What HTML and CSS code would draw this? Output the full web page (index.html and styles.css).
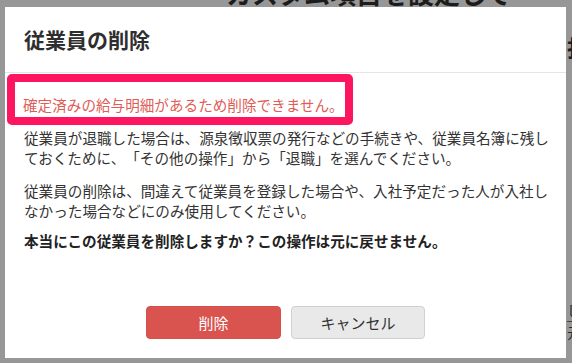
FILE: index.html
```html
<!DOCTYPE html>
<html lang="ja">
<head>
<meta charset="utf-8">
<title>従業員の削除</title>
<link rel="stylesheet" href="styles.css">
</head>
<body>
<div class="page">
  <div class="page-main">
    <h1 class="page-heading">カスタム項目を設定して</h1>
  </div>
  <div class="page-side">
    <div class="side-big">払</div>
    <div class="side-small side-small-1">し</div>
    <div class="side-rule"></div>
    <div class="side-small side-small-2">元</div>
  </div>
</div>

<div class="modal">
  <div class="modal-header">
    <h2 class="modal-title">従業員の削除</h2>
  </div>
  <div class="modal-body">
    <div class="alert-mark">
      <p class="alert-text">確定済みの給与明細があるため削除できません。</p>
    </div>
    <p class="para para-first">従業員が退職した場合は、源泉徴収票の発行などの手続きや、従業員名簿に残しておくために、「その他の操作」から「退職」を選んでください。</p>
    <p class="para para-second">従業員の削除は、間違えて従業員を登録した場合や、入社予定だった人が入社しなかった場合などにのみ使用してください。</p>
    <p class="para para-strong">本当にこの従業員を削除しますか？この操作は元に戻せません。</p>
  </div>
  <div class="modal-footer">
    <button class="btn btn-danger" type="button">削除</button>
    <button class="btn btn-default" type="button">キャンセル</button>
  </div>
</div>
</body>
</html>
```

FILE: styles.css
```css
html, body {
  margin: 0;
  padding: 0;
}

body {
  width: 572px;
  height: 363px;
  overflow: hidden;
  background: #979797;
  font-family: "Noto Sans CJK JP", "Noto Sans", "Liberation Sans", sans-serif;
  color: #333;
  position: relative;
  text-spacing-trim: space-all;
}

.page {
  display: grid;
  grid-template-columns: 567px 1fr;
  height: 363px;
  overflow: hidden;
  color: #1c1c1c;
}

.page-heading {
  margin: -24px 0 0 226px;
  font-size: 26px;
  font-weight: 700;
  line-height: 34px;
  white-space: nowrap;
}

.page-side {
  display: flex;
  flex-direction: column;
  overflow: hidden;
}

.side-big {
  margin-top: 33px;
  font-size: 22px;
  font-weight: 700;
  line-height: 26px;
  white-space: nowrap;
}

.side-small {
  font-size: 14px;
  line-height: 16px;
  color: #2a2a2a;
}

.side-small-1 {
  margin-top: 243px;
}

.side-rule {
  margin-top: 3px;
  height: 1px;
  background: #444;
}

.side-small-2 {
  margin-top: 2px;
}

.modal {
  position: absolute;
  left: 5px;
  top: 7px;
  width: 561px;
  height: 351px;
  background: #fff;
  display: flex;
  flex-direction: column;
}

.modal-header {
  height: 65px;
  border-bottom: 1px solid #e5e5e5;
  display: flex;
  align-items: center;
  padding-left: 19px;
  flex: none;
}

.modal-title {
  margin: 0 0 2px;
  font-size: 21px;
  font-weight: 700;
  color: #2e2e2e;
  line-height: 26px;
}

.modal-body {
  flex: 1;
  padding: 1px 14px 0 19px;
  font-size: 14.6px;
  line-height: 20px;
}

.alert-mark {
  margin-left: -17px;
  width: 346px;
  box-sizing: border-box;
  border: 8px solid #fd1560;
  border-radius: 5px;
  padding: 12px 0 2px 8px;
}

.alert-text {
  margin: 0;
  color: #de5d57;
  line-height: 21px;
  white-space: nowrap;
}

.para {
  margin: 0;
}

.para-first {
  margin-top: 3px;
}

.para-second {
  margin-top: 13px;
}

.para-strong {
  margin-top: 10px;
  font-weight: 700;
  color: #222;
}

.modal-footer {
  flex: none;
  display: flex;
  justify-content: center;
  gap: 10px;
  padding-bottom: 19px;
}

.btn {
  height: 33px;
  border-radius: 4px;
  font-family: inherit;
  font-size: 15px;
  line-height: 20px;
  padding: 0;
  cursor: pointer;
}

.btn-danger {
  width: 135px;
  background: #d9534f;
  border: 1px solid #d4504c;
  color: #fff;
}

.btn-default {
  width: 134px;
  background: #e9e9e9;
  border: 1px solid #d0d0d0;
  color: #333;
}
```
